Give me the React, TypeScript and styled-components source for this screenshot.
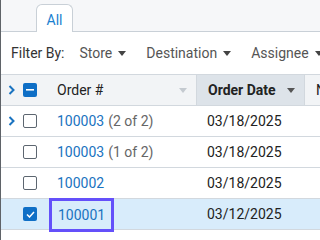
import React from 'react';
import styled, { createGlobalStyle } from 'styled-components';

const GlobalStyle = createGlobalStyle`
  html, body {
    margin: 0;
    padding: 0;
    background: #ffffff;
  }
  body {
    font-family: Roboto, "Liberation Sans", sans-serif;
    font-size: 14px;
    color: #222;
  }
`;

const Page = styled.div`
  width: 320px;
  height: 240px;
  overflow: hidden;
  box-sizing: border-box;
  border-left: 1px solid #5f6368;
  background: #ffffff;
`;

const TabStrip = styled.div`
  height: 32px;
  box-sizing: border-box;
  background: #f6f7f9;
  border-bottom: 1px solid #c9d0d7;
  display: flex;
  align-items: flex-end;
  padding-left: 35px;
`;

const Tab = styled.div`
  width: 37px;
  height: 28px;
  box-sizing: border-box;
  margin-bottom: -1px;
  background: #ffffff;
  border: 1px solid #c9d0d7;
  border-bottom: none;
  border-radius: 6px 6px 0 0;
  display: flex;
  align-items: center;
  justify-content: center;
  padding-top: 2px;
  color: #1a7fd0;
  font-size: 14px;
`;

const FilterBar = styled.div`
  height: 43px;
  box-sizing: border-box;
  display: flex;
  align-items: center;
  padding-left: 10px;
  gap: 15px;
  white-space: nowrap;
  border-bottom: 1px solid #d2d8de;
`;

const FilterLabel = styled.span`
  color: #333;
`;

const FilterItem = styled.span`
  display: inline-flex;
  align-items: center;
  gap: 6px;
  color: #555;
  margin-right: 5px;
`;

const Caret = ({ color = '#444' }: { color?: string }) => (
  <svg width="8" height="5" viewBox="0 0 8 5">
    <path d="M0 0 H8 L4 5 Z" fill={color} />
  </svg>
);

const Grid = styled.div`
  display: grid;
  grid-template-columns: 18px 27px 150px 108px 120px;
  width: 423px;
`;

const HeadCell = styled.div<{ $active?: boolean; $divider?: boolean }>`
  height: 31px;
  box-sizing: border-box;
  display: flex;
  align-items: center;
  background: ${(p) => (p.$active ? '#dde3e9' : '#f2f4f6')};
  border-bottom: 1px solid #d2d8de;
  border-left: ${(p) => (p.$divider ? '1px solid #d2d8de' : 'none')};
  font-weight: ${(p) => (p.$active ? 700 : 400)};
  color: #222;
  white-space: nowrap;
  overflow: hidden;
`;

const Cell = styled.div<{ $selected?: boolean }>`
  height: 31px;
  box-sizing: border-box;
  display: flex;
  align-items: center;
  background: ${(p) => (p.$selected ? '#d8ecfb' : '#ffffff')};
  border-bottom: 1px solid #d2d8de;
  white-space: nowrap;
  overflow: hidden;
`;

const TextCell = styled(Cell)`
  padding-left: 11px;
`;

const OrderCell = styled(Cell)`
  padding-left: 2px;
  overflow: visible;
  position: relative;
  z-index: 1;
`;

const HeadText = styled.span`
  flex: 1;
  padding-left: 11px;
`;

const SortIcon = styled.span`
  display: flex;
  padding-right: 9px;
`;

const Chevron = () => (
  <svg width="18" height="10" viewBox="0 0 18 10">
    <path d="M8.5 1 L12.5 5 L8.5 9" fill="none" stroke="#1a73c0" strokeWidth="2" />
  </svg>
);

const Box = styled.span<{ $checked?: boolean }>`
  width: 14px;
  height: 14px;
  box-sizing: border-box;
  border-radius: 2px;
  margin-left: 4px;
  display: flex;
  align-items: center;
  justify-content: center;
  border: ${(p) => (p.$checked ? 'none' : '1.5px solid #5d6670')};
  background: ${(p) => (p.$checked ? '#0f6fc6' : '#ffffff')};
`;

const Link = styled.span<{ $focused?: boolean }>`
  color: #1a73c0;
  box-sizing: border-box;
  display: inline-flex;
  align-items: center;
  height: ${(p) => (p.$focused ? '28px' : 'auto')};
  padding: ${(p) => (p.$focused ? '0 6px' : '0 0 0 9px')};
  margin: ${(p) => (p.$focused ? '2px 0 0 4px' : '0')};
  outline: ${(p) => (p.$focused ? '3px solid #6450fa' : 'none')};
`;

const Muted = styled.span`
  color: #666;
  margin-left: 4px;
`;

type Row = { id: string; part?: string; date: string; expand?: boolean; selected?: boolean };

const rows: Row[] = [
  { id: '100003', part: '(2 of 2)', date: '03/18/2025', expand: true },
  { id: '100003', part: '(1 of 2)', date: '03/18/2025' },
  { id: '100002', date: '03/18/2025' },
  { id: '100001', date: '03/12/2025', selected: true },
];

export default function App() {
  return (
    <>
      <GlobalStyle />
      <Page>
        <TabStrip>
          <Tab>All</Tab>
        </TabStrip>
        <FilterBar>
          <FilterLabel>Filter By:</FilterLabel>
          <FilterItem>
            Store <Caret />
          </FilterItem>
          <FilterItem>
            Destination <Caret />
          </FilterItem>
          <FilterItem>
            Assignee <Caret />
          </FilterItem>
        </FilterBar>
        <Grid>
          <HeadCell>
            <Chevron />
          </HeadCell>
          <HeadCell>
            <Box $checked>
              <svg width="8" height="2" viewBox="0 0 8 2">
                <rect width="8" height="1.6" fill="#fff" />
              </svg>
            </Box>
          </HeadCell>
          <HeadCell>
            <HeadText>Order #</HeadText>
            <SortIcon>
              <Caret color="#c4cad0" />
            </SortIcon>
          </HeadCell>
          <HeadCell $active $divider>
            <HeadText>Order Date</HeadText>
            <SortIcon>
              <Caret color="#555" />
            </SortIcon>
          </HeadCell>
          <HeadCell $divider>
            <HeadText>Notes</HeadText>
          </HeadCell>
          {rows.map((r, i) => (
            <React.Fragment key={i}>
              <Cell $selected={r.selected}>{r.expand && <Chevron />}</Cell>
              <Cell $selected={r.selected}>
                <Box $checked={r.selected}>
                  {r.selected && (
                    <svg width="9" height="7" viewBox="0 0 9 7">
                      <path d="M1 3.5 L3.5 6 L8 1" fill="none" stroke="#fff" strokeWidth="1.5" />
                    </svg>
                  )}
                </Box>
              </Cell>
              <OrderCell $selected={r.selected}>
                <Link $focused={r.selected}>{r.id}</Link>
                {r.part && <Muted>{r.part}</Muted>}
              </OrderCell>
              <TextCell $selected={r.selected}>{r.date}</TextCell>
              <TextCell $selected={r.selected} />
            </React.Fragment>
          ))}
        </Grid>
      </Page>
    </>
  );
}
